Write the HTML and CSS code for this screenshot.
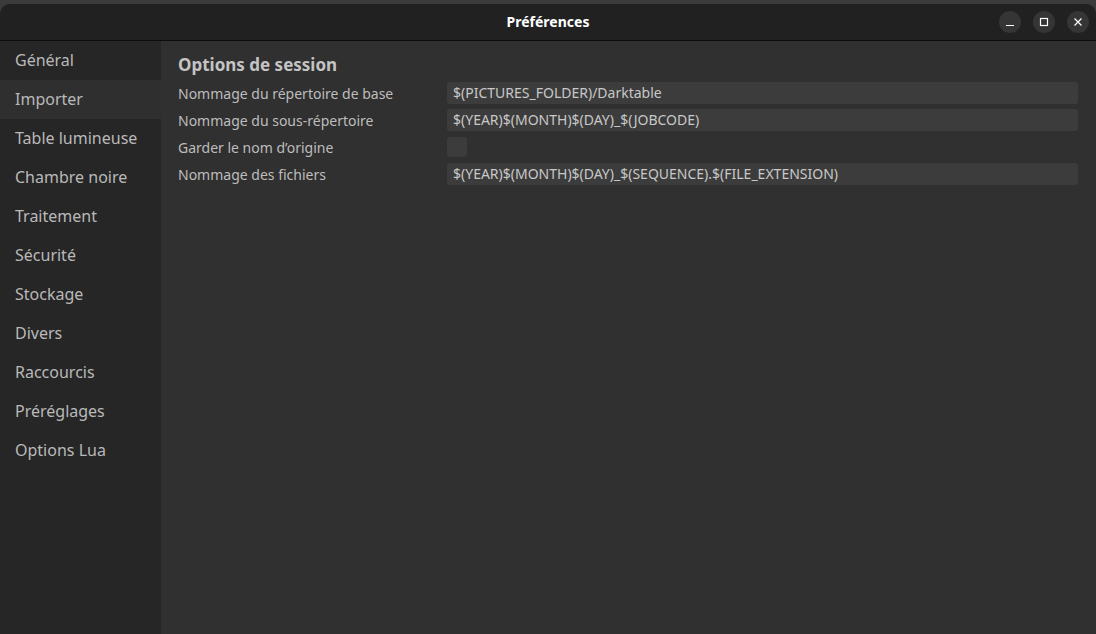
FILE: index.html
```html
<!DOCTYPE html>
<html>
<head>
<meta charset="UTF-8">
<title>Préférences</title>
<link rel="stylesheet" href="styles.css">
</head>
<body>
	<div class="topstrip"></div>
	<div class="window">
		<div class="titlebar">
			<span class="title">Préférences</span>
			<div class="controls">
				<span class="btn">
					<svg width="10" height="10" viewBox="0 0 10 10"><path d="M1 8.5h8" stroke="#fff" stroke-width="1.2"/></svg>
				</span>
				<span class="btn">
					<svg width="10" height="10" viewBox="0 0 10 10"><rect x="1.5" y="1.5" width="7" height="7" fill="none" stroke="#fff" stroke-width="1.2"/></svg>
				</span>
				<span class="btn">
					<svg width="10" height="10" viewBox="0 0 10 10"><path d="M1.5 1.5l7 7M8.5 1.5l-7 7" stroke="#fff" stroke-width="1.2"/></svg>
				</span>
			</div>
		</div>
		<div class="main">
			<ul class="sidebar">
				<li>Général</li>
				<li class="active">Importer</li>
				<li>Table lumineuse</li>
				<li>Chambre noire</li>
				<li>Traitement</li>
				<li>Sécurité</li>
				<li>Stockage</li>
				<li>Divers</li>
				<li>Raccourcis</li>
				<li>Préréglages</li>
				<li>Options Lua</li>
			</ul>
			<div class="content">
				<h3>Options de session</h3>
				<div class="row">
					<span class="label">Nommage du répertoire de base</span>
					<span class="field">$(PICTURES_FOLDER)/Darktable</span>
				</div>
				<div class="row">
					<span class="label">Nommage du sous-répertoire</span>
					<span class="field">$(YEAR)$(MONTH)$(DAY)_$(JOBCODE)</span>
				</div>
				<div class="row">
					<span class="label">Garder le nom d’origine</span>
					<span class="check"></span>
				</div>
				<div class="row">
					<span class="label">Nommage des fichiers</span>
					<span class="field">$(YEAR)$(MONTH)$(DAY)_$(SEQUENCE).$(FILE_EXTENSION)</span>
				</div>
			</div>
		</div>
	</div>
</body>
</html>
```

FILE: styles.css
```css
html, body{
	margin: 0;
	padding: 0;
	height: 100%;
	background: #3b3b3b;
	overflow: hidden;
}
body{
	font-family: "Noto Sans", "Open Sans", sans-serif;
	color: #bdbdbd;
	display: flex;
	flex-direction: column;
}
.topstrip{
	height: 4px;
	background: #3b3b3b;
}
.window{
	flex: 1;
	display: flex;
	flex-direction: column;
	background: #303030;
	border-radius: 10px 10px 0 0;
	overflow: hidden;
}
.titlebar{
	height: 36px;
	background: #212121;
	border-bottom: 1px solid #0c0c0c;
	display: flex;
	align-items: center;
	justify-content: center;
	position: relative;
}
.title{
	color: #ffffff;
	font-size: 14px;
	font-weight: bold;
	margin-bottom: 2px;
}
.controls{
	position: absolute;
	right: 7px;
	top: 7px;
	display: flex;
	gap: 12px;
}
.btn{
	width: 22px;
	height: 22px;
	border-radius: 50%;
	background: #353535;
	display: flex;
	align-items: center;
	justify-content: center;
}
.main{
	flex: 1;
	display: flex;
}
.sidebar{
	list-style-type: none;
	margin: 0;
	padding: 0;
	width: 161px;
	background: #262626;
}
.sidebar li{
	height: 39px;
	line-height: 38px;
	padding-left: 15px;
	font-size: 16px;
	color: #b9b9b9;
}
.sidebar li.active{
	background: #2f2f2f;
}
.content{
	flex: 1;
	padding: 13px 18px 0 17px;
}
h3{
	margin: 0 0 6px 0;
	font-size: 17px;
	color: #c4c4c4;
	line-height: 22px;
}
.row{
	display: flex;
	align-items: center;
	height: 22px;
	margin-bottom: 5px;
}
.row .label{
	width: 269px;
	font-size: 14px;
	white-space: nowrap;
}
.field{
	flex: 1;
	height: 22px;
	line-height: 22px;
	background: #3c3c3c;
	border-radius: 3px;
	padding-left: 6px;
	font-size: 14px;
	color: #c8c8c8;
}
.check{
	width: 20px;
	height: 20px;
	background: #3c3c3c;
	border-radius: 3px;
}
```
